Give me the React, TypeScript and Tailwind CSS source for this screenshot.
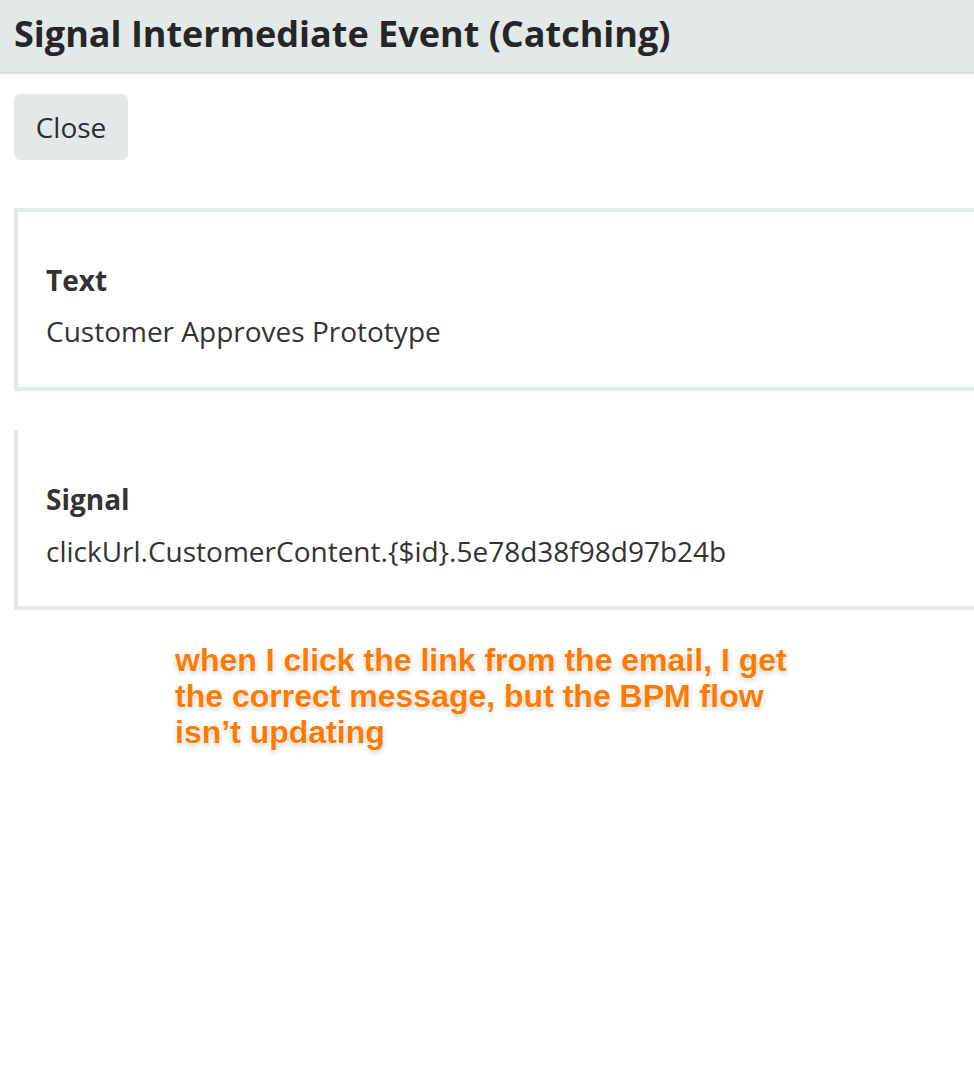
export default function App() {
  return (
    <div className="relative min-h-[1066px] w-[974px] overflow-hidden bg-white font-['Open_Sans',sans-serif] text-[#333333]">
      {/* header */}
      <div className="h-[74px] border-b-2 border-[#d6dbdb] bg-[#e3e8e8] pl-[14px] pt-[10px]">
        <h1 className="text-[36px] font-bold leading-[48px] text-[#262626]">Signal Intermediate Event (Catching)</h1>
      </div>

      <div className="pl-[14px] pt-[20px]">
        <button className="h-[66px] w-[114px] rounded-[6px] bg-[#e3e8e8] text-[28px] text-[#2d2d2d]">Close</button>
      </div>

      {/* Text card */}
      <div className="mt-[48px] ml-[14px] h-[183px] border-t-4 border-b-4 border-l-4 border-[#e3e8e8] pl-[28px] pt-[50px]">
        <div className="text-[28px] font-bold leading-[36px]">Text</div>
        <div className="mt-[15px] text-[28px] leading-[36px]">Customer Approves Prototype</div>
      </div>

      {/* Signal card */}
      <div className="mt-[39px] ml-[14px] h-[180px] border-b-4 border-l-4 border-[#e3e8e8] pl-[28px] pt-[51px]">
        <div className="text-[28px] font-bold leading-[36px]">Signal</div>
        <div className="mt-[16px] text-[28px] leading-[36px]">clickUrl.CustomerContent.{"{$id}"}.5e78d38f98d97b24b</div>
      </div>

      {/* annotation */}
      <div className="absolute top-[642px] left-[175px] w-[700px] font-['Liberation_Sans',Arial,sans-serif] text-[32px] font-bold leading-[36px] text-[#ff7a00] [text-shadow:0_0_3px_#fff,0_0_3px_#fff,0_2px_5px_rgba(0,0,0,0.25)]">
        when I click the link from the email, I get
        <br />
        the correct message, but the BPM flow
        <br />
        isn’t updating
      </div>
    </div>
  );
}
